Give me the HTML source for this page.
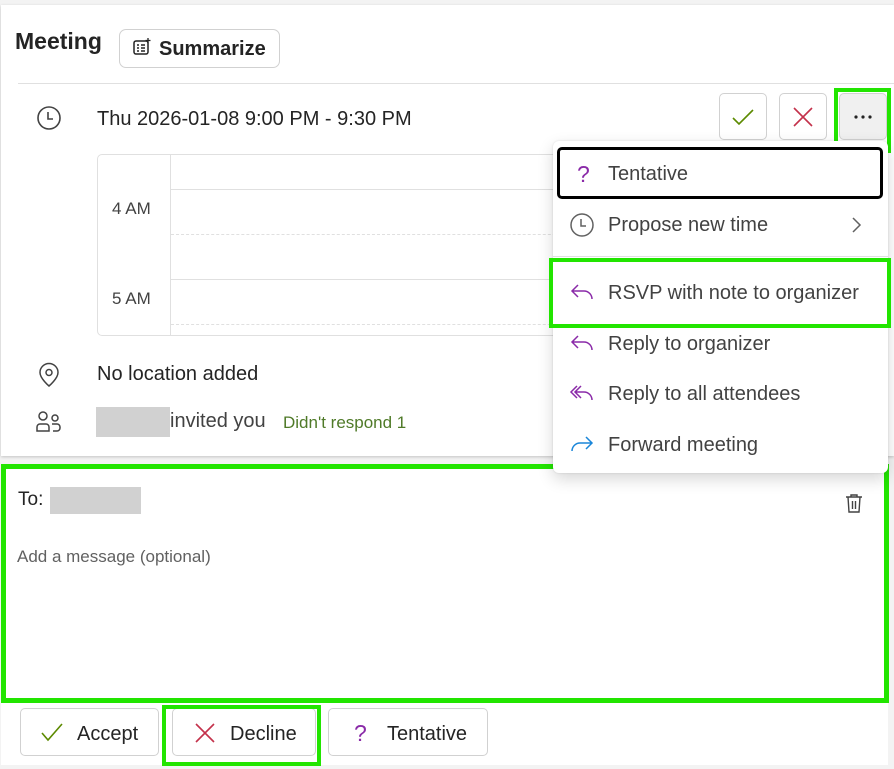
<!DOCTYPE html>
<html><head><style>
*{box-sizing:border-box;margin:0;padding:0}
body{width:894px;height:769px;background:#f3f3f3;font-family:"Liberation Sans",sans-serif;color:#242424;position:relative;overflow:hidden}
.a{position:absolute}
.card{left:1px;top:5px;width:893px;height:451px;background:#fff;box-shadow:0 1px 3px rgba(0,0,0,.2)}
.btn{border:1px solid #d1d1d1;border-radius:5px;background:#fff}
.t{white-space:nowrap}
.mi{left:553px;width:335px;height:50px;display:flex;align-items:center;font-size:20px;color:#424242}
.mi svg{position:absolute;left:16px}
.mi span{position:absolute;left:55px}
.gb{border:4px solid #22e500}
</style></head><body>
<div class="a card"></div>
<div class="a t" style="left:15px;top:28px;font-size:23px;font-weight:bold;color:#242424">Meeting</div>
<div class="a btn" style="left:119px;top:29px;width:161px;height:39px;border-radius:7px"></div>
<svg class="a" style="left:132px;top:36px" width="22" height="22" viewBox="0 0 22 22" fill="none" stroke="#242424" stroke-width="1.5"><rect x="2" y="5" width="14" height="13" rx="2"/><path d="M5 9h2M9 9h4M5 12h2M9 12h4M5 15h2M9 15h4"/><path d="M16 2v5M13.5 4.5h5" stroke-width="1.3"/></svg>
<div class="a t" style="left:159px;top:38px;font-size:20px;font-weight:bold">Summarize</div>
<div class="a" style="left:18px;top:83px;width:876px;height:1px;background:#e0e0e0"></div>
<svg class="a" style="left:36px;top:105px" width="26" height="26" viewBox="0 0 26 26" fill="none" stroke="#424242" stroke-width="1.6"><circle cx="13" cy="13" r="11"/><path d="M12 7v7h5"/></svg>
<div class="a t" style="left:97px;top:108px;font-size:20px">Thu 2026-01-08 9:00 PM - 9:30 PM</div>
<div class="a btn" style="left:719px;top:93px;width:48px;height:47px"></div>
<svg class="a" style="left:731px;top:105px" width="24" height="24" viewBox="0 0 24 24" fill="none" stroke="#5c8a00" stroke-width="1.6"><path d="M2 13l6 6L22 5"/></svg>
<div class="a btn" style="left:779px;top:93px;width:48px;height:47px"></div>
<svg class="a" style="left:791px;top:105px" width="24" height="24" viewBox="0 0 24 24" fill="none" stroke="#c4314b" stroke-width="1.6"><path d="M3 3l18 18M21 3L3 21"/></svg>
<div class="a btn" style="left:839px;top:93px;width:48px;height:47px;background:#f0f0f0"></div>
<svg class="a" style="left:853px;top:114px" width="20" height="6" viewBox="0 0 20 6" fill="#242424"><circle cx="3" cy="3" r="1.6"/><circle cx="10" cy="3" r="1.6"/><circle cx="17" cy="3" r="1.6"/></svg>
<div class="a gb" style="left:834px;top:88px;width:57px;height:65px"></div>
<div class="a" style="left:97px;top:154px;width:500px;height:182px;border:1px solid #e0e0e0;border-radius:5px"></div>
<div class="a" style="left:170px;top:155px;width:1px;height:180px;background:#e0e0e0"></div>
<div class="a" style="left:171px;top:189px;width:420px;height:1px;background:#e0e0e0"></div>
<div class="a" style="left:171px;top:234px;width:420px;border-top:1px dashed #e0e0e0"></div>
<div class="a" style="left:171px;top:279px;width:420px;height:1px;background:#e0e0e0"></div>
<div class="a" style="left:171px;top:324px;width:420px;border-top:1px dashed #e0e0e0"></div>
<div class="a t" style="left:112px;top:199px;font-size:17px;color:#424242">4 AM</div>
<div class="a t" style="left:112px;top:289px;font-size:17px;color:#424242">5 AM</div>
<svg class="a" style="left:37px;top:362px" width="24" height="26" viewBox="0 0 24 26" fill="none" stroke="#424242" stroke-width="1.5"><path d="M12 24s-9-7.5-9-13.5a9 9 0 0118 0C21 16.5 12 24 12 24z"/><circle cx="12" cy="10.5" r="3"/></svg>
<div class="a t" style="left:97px;top:363px;font-size:20px">No location added</div>
<svg class="a" style="left:35px;top:410px" width="28" height="24" viewBox="0 0 28 24" fill="none" stroke="#424242" stroke-width="1.5"><circle cx="8" cy="6" r="4"/><path d="M2 21v-4a3 3 0 013-3h6a3 3 0 013 3v4z"/><circle cx="20" cy="8" r="3"/><path d="M17 14h5a3 3 0 013 3v1a3 3 0 01-3 3h-4"/></svg>
<div class="a" style="left:96px;top:407px;width:74px;height:30px;background:#d1d1d1"></div>
<div class="a t" style="left:170px;top:410px;font-size:20px;color:#424242">invited you</div>
<div class="a t" style="left:283px;top:413px;font-size:17px;color:#4f7a28">Didn't respond 1</div>

<div class="a" style="left:1px;top:464px;width:887px;height:301px;background:#fff"></div>
<div class="a gb" style="left:1px;top:464px;width:888px;height:239px;border-width:5px"></div>
<div class="a t" style="left:18px;top:489px;font-size:19px">To:</div>
<div class="a" style="left:50px;top:487px;width:91px;height:27px;background:#d1d1d1"></div>
<svg class="a" style="left:844px;top:492px" width="20" height="22" viewBox="0 0 20 22" fill="none" stroke="#424242" stroke-width="1.4"><path d="M2 5h16M7 5V3h6v2M4 5l1 15h10l1-15M8.5 9v8M11.5 9v8"/></svg>
<div class="a t" style="left:17px;top:547px;font-size:17px;color:#616161">Add a message (optional)</div>
<div class="a btn" style="left:20px;top:708px;width:139px;height:48px"></div>
<svg class="a" style="left:40px;top:721px" width="24" height="22" viewBox="0 0 24 22" fill="none" stroke="#5c8a00" stroke-width="1.6"><path d="M2 12l6 7L22 3"/></svg>
<div class="a t" style="left:77px;top:723px;font-size:20px">Accept</div>
<div class="a btn" style="left:172px;top:708px;width:144px;height:48px"></div>
<svg class="a" style="left:194px;top:722px" width="22" height="22" viewBox="0 0 22 22" fill="none" stroke="#c4314b" stroke-width="1.6"><path d="M2 2l18 18M20 2L2 20"/></svg>
<div class="a t" style="left:230px;top:723px;font-size:20px">Decline</div>
<div class="a gb" style="left:162px;top:705px;width:159px;height:61px"></div>
<div class="a btn" style="left:328px;top:708px;width:160px;height:48px"></div>
<div class="a t" style="left:354px;top:720px;font-size:23px;color:#8a2aa8">?</div>
<div class="a t" style="left:387px;top:723px;font-size:20px">Tentative</div>

<div class="a" style="left:553px;top:141px;width:335px;height:332px;background:#fff;border-radius:6px;box-shadow:0 6px 16px rgba(0,0,0,.16),0 0 2px rgba(0,0,0,.12)"></div>
<div class="a" style="left:557px;top:147px;width:326px;height:52px;border:3px solid #000;border-radius:5px"></div>
<div class="a mi" style="top:149px"><span style="left:24px;color:#8a2aa8;font-size:23px">?</span><span>Tentative</span></div>
<div class="a mi" style="top:200px"><svg width="26" height="26" viewBox="0 0 26 26" fill="none" stroke="#616161" stroke-width="1.5"><circle cx="13" cy="13" r="11"/><path d="M12 7v7h5"/></svg><span>Propose new time</span><svg style="left:296px" width="14" height="20" viewBox="0 0 14 20" fill="none" stroke="#616161" stroke-width="1.5"><path d="M4 3l7 7-7 7"/></svg></div>
<div class="a" style="left:553px;top:256px;width:335px;height:1px;background:#e0e0e0"></div>
<div class="a mi" style="top:268px"><svg width="26" height="22" viewBox="0 0 26 22" fill="none" stroke="#8a2aa8" stroke-width="1.5"><path d="M9 3L3 9l6 6M3 9h12a8 8 0 018 8"/></svg><span>RSVP with note to organizer</span></div>
<div class="a gb" style="left:549px;top:258px;width:342px;height:70px"></div>
<div class="a mi" style="top:319px"><svg width="26" height="22" viewBox="0 0 26 22" fill="none" stroke="#8a2aa8" stroke-width="1.5"><path d="M9 3L3 9l6 6M3 9h12a8 8 0 018 8"/></svg><span>Reply to organizer</span></div>
<div class="a mi" style="top:369px"><svg width="26" height="22" viewBox="0 0 26 22" fill="none" stroke="#8a2aa8" stroke-width="1.5"><path d="M8 3L2 9l6 6M12 3L6 9l6 6M6 9h9a8 8 0 018 8"/></svg><span>Reply to all attendees</span></div>
<div class="a mi" style="top:420px"><svg width="26" height="22" viewBox="0 0 26 22" fill="none" stroke="#1a86d9" stroke-width="1.5"><path d="M17 3l6 6-6 6M23 9H11a8 8 0 00-8 8"/></svg><span>Forward meeting</span></div>
</body></html>
